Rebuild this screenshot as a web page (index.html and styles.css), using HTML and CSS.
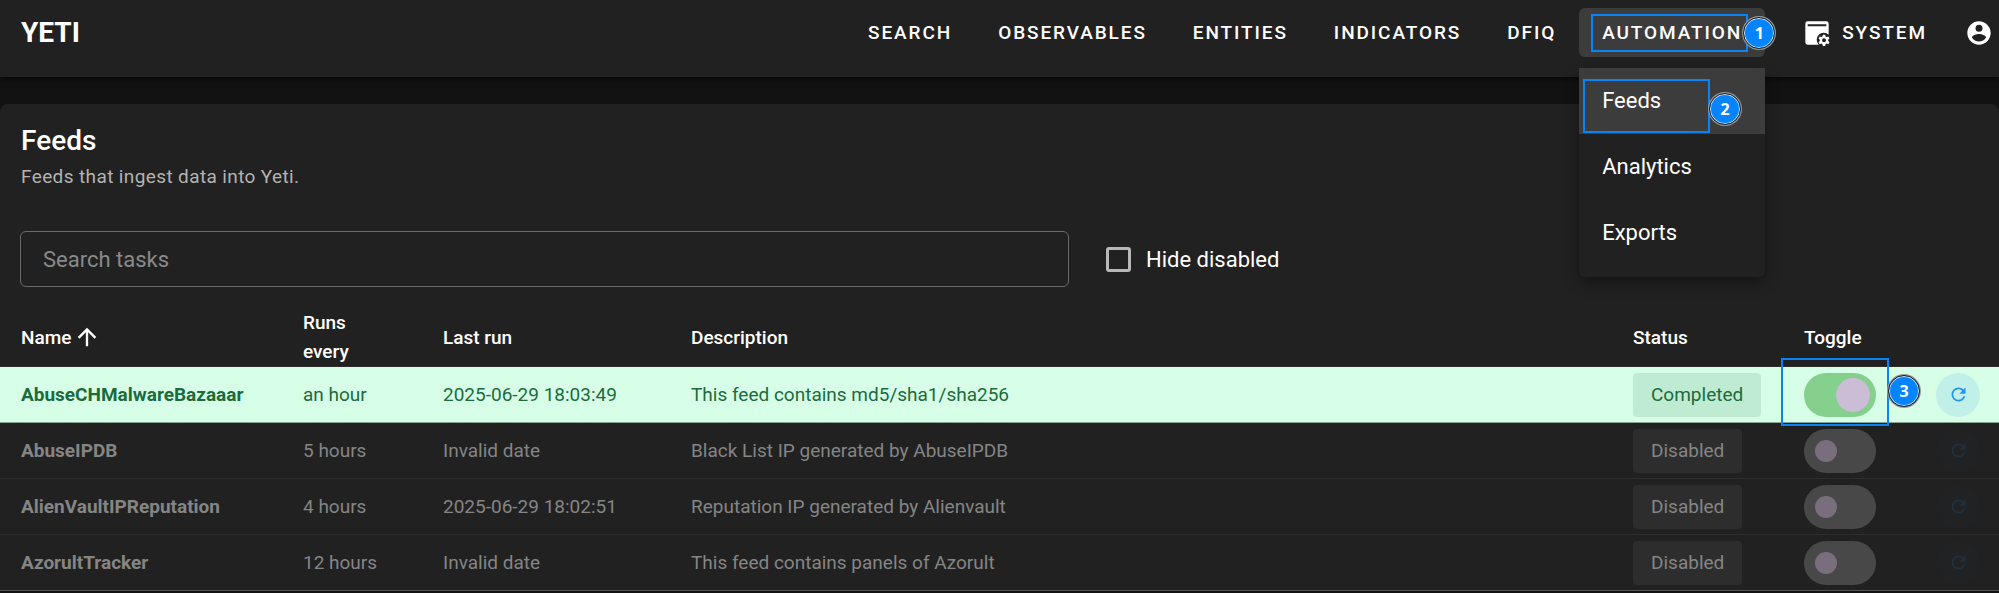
FILE: index.html
```html
<!DOCTYPE html>
<html lang="en">
<head>
<meta charset="utf-8">
<title>Yeti - Feeds</title>
<link rel="stylesheet" href="styles.css">
</head>
<body>
<header class="app-bar">
  <a class="brand" href="#">YETI</a>
  <nav class="nav">
    <a class="nav-link" href="#">Search</a>
    <a class="nav-link" href="#">Observables</a>
    <a class="nav-link" href="#">Entities</a>
    <a class="nav-link" href="#">Indicators</a>
    <a class="nav-link" href="#">DFIQ</a>
    <div class="nav-group">
      <button class="nav-link nav-link-active" type="button">Automation</button>
      <span class="frame frame-nav"></span>
      <span class="marker marker-nav">1</span>
      <div class="menu">
        <a class="menu-item menu-item-active" href="#">Feeds
          <span class="frame frame-menu"></span>
          <span class="marker marker-menu">2</span>
        </a>
        <a class="menu-item" href="#">Analytics</a>
        <a class="menu-item" href="#">Exports</a>
      </div>
    </div>
    <button class="nav-link nav-system" type="button">
      <svg class="icon-nav" viewBox="0 0 24 24"><path fill-rule="evenodd" d="M4 2H20A2 2 0 0 1 22 4V13.500A6 6 0 0 0 13.500 22H4A2 2 0 0 1 2 20V4A2 2 0 0 1 4 2ZM4 4.500V6.200H20V4.500Z"/><path fill-rule="evenodd" d="M17 13.500h2l.3 1.400 1 .6 1.400-.5 1 1.700-1.100 1v1.200l1.100 1-1 1.700-1.400-.5-1 .6-.3 1.400h-2l-.3-1.400-1-.6-1.400.5-1-1.700 1.100-1v-1.200l-1.100-1 1-1.700 1.400.5 1-.6zM18 16.500a1.700 1.700 0 1 0 .01 0z"/></svg>
      System
    </button>
    <button class="account" type="button" aria-label="Account">
      <svg class="icon-nav" viewBox="0 0 24 24"><path d="M12,19.2C9.5,19.2 7.29,17.92 6,16C6.03,14 10,12.9 12,12.9C14,12.9 17.97,14 18,16C16.71,17.92 14.5,19.2 12,19.2M12,5A3,3 0 0,1 15,8A3,3 0 0,1 12,11A3,3 0 0,1 9,8A3,3 0 0,1 12,5M12,2A10,10 0 0,0 2,12A10,10 0 0,0 12,22A10,10 0 0,0 22,12C22,6.47 17.5,2 12,2Z"/></svg>
    </button>
  </nav>
</header>

<main class="card">
  <div class="card-head">
    <h1 class="title">Feeds</h1>
    <p class="subtitle">Feeds that ingest data into Yeti.</p>
  </div>
  <form class="filters">
    <input class="search" type="text" placeholder="Search tasks" aria-label="Search tasks">
    <label class="check"><input class="check-box" type="checkbox">Hide disabled</label>
  </form>
  <table class="tasks">
    <colgroup>
      <col class="col-name"><col class="col-every"><col class="col-last"><col><col class="col-status"><col class="col-toggle"><col class="col-run">
    </colgroup>
    <thead>
      <tr>
        <th><span class="sorted">Name<svg class="icon-sort" viewBox="0 0 24 24"><path d="M13,20H11V8L5.5,13.5L4.08,12.08L12,4.16L19.92,12.08L18.5,13.5L13,8V20Z"/></svg></span></th>
        <th>Runs every</th>
        <th>Last run</th>
        <th>Description</th>
        <th>Status</th>
        <th>Toggle</th>
        <th></th>
      </tr>
    </thead>
    <tbody>
      <tr class="row-on">
        <td class="name">AbuseCHMalwareBazaaar</td>
        <td>an hour</td>
        <td>2025-06-29 18:03:49</td>
        <td>This feed contains md5/sha1/sha256</td>
        <td><span class="chip">Completed</span></td>
        <td class="toggle-cell"><input class="switch" type="checkbox" checked aria-label="Enable AbuseCHMalwareBazaaar"><span class="frame frame-toggle"></span><span class="marker marker-toggle">3</span></td>
        <td><button class="run" type="button" aria-label="Run AbuseCHMalwareBazaaar"><svg class="icon-run" viewBox="0 0 24 24"><path d="M17.65,6.35C16.2,4.9 14.21,4 12,4A8,8 0 0,0 4,12A8,8 0 0,0 12,20C15.73,20 18.84,17.45 19.73,14H17.65C16.83,16.33 14.61,18 12,18A6,6 0 0,1 6,12A6,6 0 0,1 12,6C13.66,6 15.14,6.69 16.22,7.78L13,11H20V4L17.65,6.35Z"/></svg></button></td>
      </tr>
      <tr class="row-off">
        <td class="name">AbuseIPDB</td>
        <td>5 hours</td>
        <td>Invalid date</td>
        <td>Black List IP generated by AbuseIPDB</td>
        <td><span class="chip">Disabled</span></td>
        <td><input class="switch" type="checkbox" aria-label="Enable AbuseIPDB"></td>
        <td><button class="run" type="button" disabled aria-label="Run AbuseIPDB"><svg class="icon-run" viewBox="0 0 24 24"><path d="M17.65,6.35C16.2,4.9 14.21,4 12,4A8,8 0 0,0 4,12A8,8 0 0,0 12,20C15.73,20 18.84,17.45 19.73,14H17.65C16.83,16.33 14.61,18 12,18A6,6 0 0,1 6,12A6,6 0 0,1 12,6C13.66,6 15.14,6.69 16.22,7.78L13,11H20V4L17.65,6.35Z"/></svg></button></td>
      </tr>
      <tr class="row-off">
        <td class="name">AlienVaultIPReputation</td>
        <td>4 hours</td>
        <td>2025-06-29 18:02:51</td>
        <td>Reputation IP generated by Alienvault</td>
        <td><span class="chip">Disabled</span></td>
        <td><input class="switch" type="checkbox" aria-label="Enable AlienVaultIPReputation"></td>
        <td><button class="run" type="button" disabled aria-label="Run AlienVaultIPReputation"><svg class="icon-run" viewBox="0 0 24 24"><path d="M17.65,6.35C16.2,4.9 14.21,4 12,4A8,8 0 0,0 4,12A8,8 0 0,0 12,20C15.73,20 18.84,17.45 19.73,14H17.65C16.83,16.33 14.61,18 12,18A6,6 0 0,1 6,12A6,6 0 0,1 12,6C13.66,6 15.14,6.69 16.22,7.78L13,11H20V4L17.65,6.35Z"/></svg></button></td>
      </tr>
      <tr class="row-off">
        <td class="name">AzorultTracker</td>
        <td>12 hours</td>
        <td>Invalid date</td>
        <td>This feed contains panels of Azorult</td>
        <td><span class="chip">Disabled</span></td>
        <td><input class="switch" type="checkbox" aria-label="Enable AzorultTracker"></td>
        <td><button class="run" type="button" disabled aria-label="Run AzorultTracker"><svg class="icon-run" viewBox="0 0 24 24"><path d="M17.65,6.35C16.2,4.9 14.21,4 12,4A8,8 0 0,0 4,12A8,8 0 0,0 12,20C15.73,20 18.84,17.45 19.73,14H17.65C16.83,16.33 14.61,18 12,18A6,6 0 0,1 6,12A6,6 0 0,1 12,6C13.66,6 15.14,6.69 16.22,7.78L13,11H20V4L17.65,6.35Z"/></svg></button></td>
      </tr>
    </tbody>
  </table>
</main>
</body>
</html>
```

FILE: styles.css
```css
* { box-sizing: border-box; }

body {
  margin: 0;
  background: #121212;
  color: #fff;
  font-family: Roboto, sans-serif;
  font-size: 19px;
  line-height: 29px;
}

a { color: inherit; text-decoration: none; }
button { border: 0; background: none; color: inherit; font: inherit; cursor: pointer; }
svg { fill: currentColor; display: block; }

.app-bar {
  position: relative;
  z-index: 2;
  display: flex;
  justify-content: space-between;
  align-items: flex-start;
  padding: 8px 0 20px 21px;
  background: #212121;
  box-shadow: 0 3px 6px rgba(0, 0, 0, 0.5);
}

.brand { font-size: 28px; font-weight: 700; line-height: 49px; }
.nav { display: flex; }

.nav-link {
  display: flex;
  align-items: center;
  height: 49px;
  padding: 0 23px;
  border-radius: 6px;
  font-weight: 500;
  letter-spacing: 0.1em;
  text-transform: uppercase;
}

.nav-group { position: relative; }
.nav-link-active { background: #3c3c3c; }
.nav-system { gap: 11px; margin-left: 15px; }
.icon-nav { width: 28px; height: 28px; }
.account { display: flex; align-items: center; height: 49px; padding: 0 6px 0 15px; }

.menu {
  position: absolute;
  top: 60px;
  left: 0;
  width: 100%;
  padding-bottom: 11px;
  border-radius: 0 0 6px 6px;
  background: #212121;
  box-shadow: 0 6px 14px rgba(0, 0, 0, 0.4);
}

.menu-item {
  position: relative;
  display: block;
  padding: 18px 23px 19px;
  font-size: 22px;
}

.menu-item-active { background: #3c3c3c; }

.frame { position: absolute; border: 2px solid #0a84f5; }
.frame-nav { top: 6px; left: 12px; right: 17px; height: 38px; }
.frame-menu { top: 11px; left: 4px; width: 127px; height: 54px; }
.frame-toggle { top: -9px; left: -2px; width: 108px; height: 68px; }

.marker {
  position: absolute;
  z-index: 1;
  width: 32px;
  height: 32px;
  border: 1px solid #222;
  border-radius: 50%;
  background: #0584ff;
  box-shadow: inset 0 0 0 1px #cfe6ff, 0 0 0 1px #999;
  color: #fff;
  font: 700 16px/30px "Open Sans", sans-serif;
  text-align: center;
}

.marker-nav { top: 9px; right: -10px; }
.marker-menu { top: 25px; left: 130px; }
.marker-toggle { top: 8px; left: 105px; }

.card {
  margin-top: 27px;
  border-radius: 8px 8px 0 0;
  background: #212121;
}

.card-head { padding: 15px 21px 40px; }
.title { margin: 0; font-size: 28px; font-weight: 500; line-height: 44px; }
.subtitle { margin: 0; color: #b3b3b3; line-height: 28px; letter-spacing: 0.02em; }

.filters { display: flex; align-items: center; gap: 31px; padding: 0 20px 21px; }

.search {
  flex: 0 1 1049px;
  min-width: 0;
  height: 56px;
  padding: 0 22px;
  border: 1px solid #6a6a6a;
  border-radius: 6px;
  background: none;
  color: #fff;
  font: 22px Roboto, sans-serif;
}

.search::placeholder { color: #8a8a8a; opacity: 1; }
.check { display: flex; align-items: center; gap: 15px; padding-left: 6px; font-size: 22px; white-space: nowrap; }

.check-box {
  appearance: none;
  width: 25px;
  height: 25px;
  margin: 0;
  border: 3px solid #b8b8b8;
  border-radius: 3px;
}

.tasks { width: 100%; border-collapse: separate; border-spacing: 0; table-layout: fixed; }
.col-name { width: 282px; }
.col-every { width: 140px; }
.col-last { width: 248px; }
.col-status { width: 171px; }
.col-toggle { width: 132px; }
.col-run { width: 84px; }

th, td { padding: 0 0 0 21px; border-bottom: 1px solid #2d2d2d; text-align: left; }
th { height: 59px; padding-right: 32px; font-weight: 500; }
td { height: 56px; }
.name { font-weight: 700; }
.sorted { display: flex; align-items: center; gap: 2px; }
.icon-sort { width: 28px; height: 28px; }

.row-on { background: #d7ffe8; color: #1b6b3c; }
.row-on td { border-bottom-color: #86a393; }
.row-off td { color: #858585; }
tbody tr:last-child td { border-bottom-color: #555; }

.chip {
  display: inline-block;
  padding: 0 18px;
  border-radius: 4px;
  background: #2d2d2d;
  line-height: 44px;
  vertical-align: top;
}

.row-on .chip { background: #c0ebd3; }
.toggle-cell { position: relative; }

.switch {
  appearance: none;
  display: flex;
  align-items: center;
  width: 72px;
  height: 44px;
  margin: 0;
  padding: 0 11px;
  border-radius: 22px;
  background: #484848;
}

.switch::before { content: ""; width: 22px; height: 22px; border-radius: 50%; background: #786e7e; }
.switch:checked { justify-content: flex-end; padding: 0 6px; background: #86d08e; }
.switch:checked::before { width: 34px; height: 34px; background: #cbbdd5; }

.run {
  display: flex;
  align-items: center;
  justify-content: center;
  width: 44px;
  height: 44px;
  padding: 0;
  border-radius: 50%;
  background: #c1f0e9;
  color: #2196f3;
}

.run:disabled { background: #202224; color: #203140; }
.icon-run { width: 21px; height: 21px; }
```
